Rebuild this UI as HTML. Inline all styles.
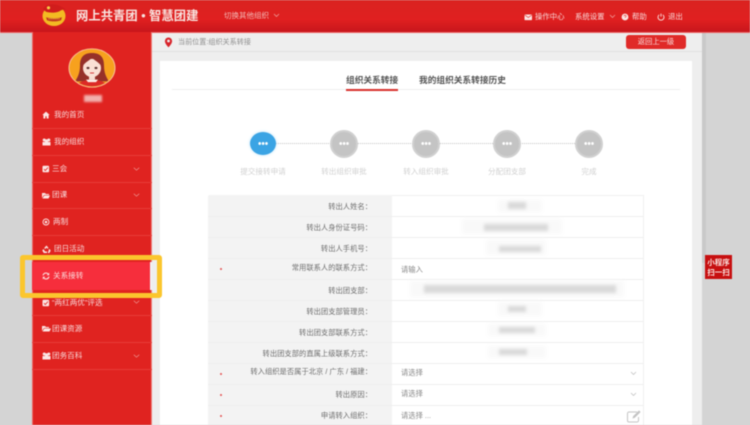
<!DOCTYPE html>
<html lang="zh"><head><meta charset="utf-8"><title>关系接转</title>
<style>
*{box-sizing:border-box}
html,body{margin:0;padding:0;width:750px;height:425px;overflow:hidden;background:#d4d4d4}
body{font-family:"Liberation Sans","Noto Sans CJK SC",sans-serif;position:relative}
#w{position:absolute;left:0;top:0;width:750px;height:425px;overflow:hidden;filter:blur(.6px);background:#d4d4d4}
.a{position:absolute;white-space:nowrap}
.hd{left:0;top:0;width:750px;height:32.5px;background:linear-gradient(#da2320 0,#e02020 60%,#c8161c 100%);border-bottom:.5px solid #e66}
.m{left:31.5px;width:120px;height:27px;border-bottom:1px solid #e73c38;}
.t{color:#f8d8d8;font-size:7.6px;line-height:10px}
.n{color:#f8d8d8;font-size:7.4px;line-height:10px}
.lb{width:200px;left:172px;text-align:right;font-size:7.3px;color:#6e6e6e;line-height:10px}
.line{left:208px;width:435px;height:1px;background:#eeeeee}
.ph{left:401px;font-size:7.3px;color:#888;line-height:10px}
.st{color:#d0d0d0;font-size:7.6px;line-height:10px;text-align:center;width:80px}
.dot{width:28px;height:28px;border-radius:50%;background:#c4c4c4;border:2px solid #d0d0d0}
.dots{width:10px;height:3px;background:radial-gradient(circle,#fff 1.3px,transparent 1.5px) 0 0/3.4px 3px repeat-x}
.b{background:#d9d9d9;filter:blur(1.5px)}
.h{background:#f9f9f9;filter:blur(2px)}
.req{left:220px;width:2px;height:2px;background:#e35050;border-radius:50%}
</style></head><body>
<div id="w">
<div class="a hd"></div>
<!-- logo -->
<svg class="a" style="left:41px;top:3px" width="27" height="24" viewBox="0 0 27 24"><ellipse cx="13" cy="13" rx="11.500" ry="10" fill="#f3bb22"/><path d="M2 6C4 2.500 7 1.200 11 1.200c5 0 9.500 1.800 14 5.300-3.500-.3-5 .7-7 2-4 1.500-9 1.500-13 .3C4 8 3 7 2 6z" fill="#d01d1c"/><circle cx="7.500" cy="4.800" r="1.600" fill="#f7cf48"/><path d="M5 14.200c5 1.500 11 1.500 16 0l-1 3c-4 1.600-10 1.600-14 0z" fill="#c23a1e"/><path d="M7.500 15.800h11" stroke="#f7d65a" stroke-width=".7" stroke-dasharray="1.200 .8"/></svg>
<div class="a" style="left:76px;top:9px;font-size:12.300px;line-height:15px;font-weight:bold;color:#f8e4e0;letter-spacing:.05px">网上共青团 • 智慧团建</div>
<div class="a" style="left:224px;top:11px;font-size:7.500px;line-height:10px;color:#f3b9b6">切换其他组织</div>
<svg class="a" style="left:273px;top:13px" width="7" height="5"><path d="M1 1l2.500 2.500L6 1" fill="none" stroke="#f0a9a5" stroke-width=".7"/></svg>
<!-- right nav -->
<svg class="a" style="left:524px;top:14px" width="9" height="7"><rect x=".5" y=".5" width="7.500" height="5.600" rx=".6" fill="#fbe6e4"/><path d="M.8 1l3.500 2.500L7.800 1" stroke="#da2320" stroke-width=".6" fill="none"/></svg>
<div class="a n" style="left:535px;top:12px">操作中心</div>
<div class="a n" style="left:575px;top:12px">系统设置</div>
<svg class="a" style="left:609px;top:14px" width="7" height="5"><path d="M1 1l2.500 2.500L6 1" fill="none" stroke="#f0a9a5" stroke-width=".7"/></svg>
<svg class="a" style="left:621px;top:13px" width="8" height="8"><circle cx="4" cy="4" r="3.400" fill="#fbe6e4"/><path d="M3 3.200c0-1.300 2.100-1.300 2.100 0 0 .8-1 .8-1 1.600" stroke="#da2320" stroke-width=".6" fill="none"/></svg>
<div class="a n" style="left:632px;top:12px">帮助</div>
<svg class="a" style="left:657px;top:13px" width="8" height="8"><path d="M2.200 1.800a3 3 0 1 0 3.600 0M4 .6v3" stroke="#fbe6e4" stroke-width=".9" fill="none"/></svg>
<div class="a n" style="left:668px;top:12px">退出</div>

<!-- content bg -->
<div class="a" style="left:151px;top:33px;width:551px;height:392px;background:#eeeeee"></div>
<div class="a" style="left:702px;top:33px;width:4px;height:230px;background:#c9c9c9"></div>
<div class="a" style="left:152px;top:51px;width:550px;height:1px;background:#e0e0e0"></div>
<svg class="a" style="left:164px;top:37px" width="9" height="11" viewBox="0 0 9 11"><path d="M4.500.5a3.600 3.600 0 0 0-3.600 3.600c0 2.600 3.600 6.200 3.600 6.200s3.600-3.600 3.600-6.200A3.600 3.600 0 0 0 4.500.5z" fill="#d8232a"/><circle cx="4.500" cy="4" r="1.400" fill="#eee"/></svg>
<div class="a" style="left:178px;top:37px;font-size:7.100px;line-height:10px;color:#8e8e8e">当前位置:组织关系转接</div>
<div class="a" style="left:626px;top:35px;width:60px;height:14px;border-radius:3px;background:#e02a28;color:#f9dcda;font-size:7.300px;line-height:14px;text-align:center">返回上一级</div>

<!-- card -->
<div class="a" style="left:160px;top:61px;width:532px;height:364px;background:#fff"></div>
<div class="a" style="left:172px;top:89px;width:508px;height:1px;background:#eeeeee"></div>
<div class="a" style="left:346px;top:75px;font-size:8.700px;line-height:11px;font-weight:bold;color:#555">组织关系转接</div>
<div class="a" style="left:346px;top:89px;width:52px;height:1.500px;background:#d8302c"></div>
<div class="a" style="left:419px;top:75px;font-size:8.700px;line-height:11px;font-weight:bold;color:#555">我的组织关系转接历史</div>

<!-- steps -->
<div class="a" style="left:275px;top:143px;width:302px;border-top:1px dotted #c4c4c4"></div>
<div class="a" style="left:250px;top:132px;width:26px;height:23px;border-radius:50%;background:#3ba4e4;box-shadow:0 0 3px #bfe3f8"></div>
<div class="a dots" style="left:258px;top:142px"></div>
<div class="a dot" style="left:330px;top:130px"></div><div class="a dots" style="left:339px;top:142px"></div>
<div class="a dot" style="left:412px;top:130px"></div><div class="a dots" style="left:421px;top:142px"></div>
<div class="a dot" style="left:493px;top:130px"></div><div class="a dots" style="left:502px;top:142px"></div>
<div class="a dot" style="left:575px;top:130px"></div><div class="a dots" style="left:584px;top:142px"></div>
<div class="a st" style="left:223px;top:167px">提交接转申请</div>
<div class="a st" style="left:304px;top:167px">转出组织审批</div>
<div class="a st" style="left:386px;top:167px">转入组织审批</div>
<div class="a st" style="left:467px;top:167px">分配团支部</div>
<div class="a st" style="left:549px;top:167px">完成</div>

<!-- table -->
<div class="a" style="left:208px;top:195px;width:184px;height:230px;background:#f3f3f3;border-radius:2px 0 0 0"></div>
<div class="a" style="left:392px;top:195px;width:251.500px;height:230px;border:1px solid #f0f0f0;border-bottom:0;border-left:0"></div>
<div class="a line" style="top:216px"></div><div class="a line" style="top:237px"></div><div class="a line" style="top:258px"></div><div class="a line" style="top:279px"></div><div class="a line" style="top:300px"></div><div class="a line" style="top:321px"></div><div class="a line" style="top:342px"></div><div class="a line" style="top:363px"></div><div class="a line" style="top:384px"></div><div class="a line" style="top:405px"></div>
<div class="a lb" style="top:202px">转出人姓名：</div>
<div class="a lb" style="top:223px">转出人身份证号码：</div>
<div class="a lb" style="top:244px">转出人手机号：</div>
<div class="a lb" style="top:263px">常用联系人的联系方式：</div>
<div class="a lb" style="top:286px">转出团支部：</div>
<div class="a lb" style="top:307px">转出团支部管理员：</div>
<div class="a lb" style="top:328px">转出团支部联系方式：</div>
<div class="a lb" style="top:349px">转出团支部的直属上级联系方式：</div>
<div class="a lb" style="top:367px">转入组织是否属于北京 / 广东 / 福建：</div>
<div class="a lb" style="top:390px">转出原因：</div>
<div class="a lb" style="top:411px">申请转入组织：</div>
<div class="a req" style="top:268px"></div><div class="a req" style="top:373px"></div><div class="a req" style="top:394px"></div><div class="a req" style="top:415px"></div>
<div class="a ph" style="top:265px">请输入</div>
<div class="a ph" style="top:368px">请选择</div>
<div class="a ph" style="top:389px">请选择</div>
<div class="a ph" style="top:411px">请选择 ...</div>
<svg class="a" style="left:630px;top:371px" width="7" height="5"><path d="M1 1l2.500 2.500L6 1" fill="none" stroke="#bbb" stroke-width=".7"/></svg>
<svg class="a" style="left:630px;top:392px" width="7" height="5"><path d="M1 1l2.500 2.500L6 1" fill="none" stroke="#bbb" stroke-width=".7"/></svg>
<svg class="a" style="left:626px;top:409px" width="16" height="14" viewBox="0 0 16 14"><path d="M11 3H3a1.500 1.500 0 0 0-1.500 1.500v7A1.500 1.500 0 0 0 3 13h8a1.500 1.500 0 0 0 1.500-1.500V8" fill="none" stroke="#c4c4c4" stroke-width="1"/><path d="M6.500 9.500l.6-2.200L13 1.400l1.600 1.600-5.900 5.900z" fill="#c4c4c4"/></svg>
<!-- masked values -->
<div class="a h" style="left:498px;top:200px;width:44px;height:12px"></div>
<div class="a h" style="left:462px;top:219px;width:100px;height:15px"></div>
<div class="a h" style="left:486px;top:240px;width:60px;height:15px"></div>
<div class="a h" style="left:410px;top:281px;width:214px;height:16px"></div>
<div class="a h" style="left:498px;top:302px;width:44px;height:14px"></div>
<div class="a h" style="left:488px;top:324px;width:58px;height:12px"></div>
<div class="a h" style="left:488px;top:346px;width:58px;height:12px"></div>
<div class="a b" style="left:508px;top:202px;width:18px;height:7px"></div>
<div class="a b" style="left:484px;top:224px;width:64px;height:7px"></div>
<div class="a b" style="left:499px;top:246px;width:42px;height:6px"></div>
<div class="a b" style="left:424px;top:285px;width:192px;height:8px"></div>
<div class="a b" style="left:508px;top:306px;width:18px;height:6px"></div>
<div class="a b" style="left:499px;top:327px;width:36px;height:6px"></div>
<div class="a b" style="left:499px;top:349px;width:28px;height:6px"></div>

<!-- sidebar -->
<div class="a" style="left:31.500px;top:32px;width:120px;height:393px;background:#e02320;border-right:1px solid #ee7c78;border-left:.5px solid #ea6a66"></div>
<svg class="a" style="left:67.500px;top:47.500px" width="48" height="40" viewBox="0 0 48 48" preserveAspectRatio="none"><defs><clipPath id="av"><circle cx="24" cy="24" r="22"/></clipPath></defs><circle cx="24" cy="24" r="23" fill="#f7a11e" stroke="#f8bf96" stroke-width="1"/><g clip-path="url(#av)"><path d="M24 6C15 6 12 12 12 21c0 8-2 14-5 19h34c-3-5-5-11-5-19 0-9-3-15-12-15z" fill="#963029"/><path d="M7 48c1-6 9-10 17-10s16 4 17 10z" fill="#dc2a26"/><path d="M18 38h12l-2 3h-8z" fill="#fdf2ec"/><rect x="21" y="32" width="6" height="6" fill="#f7dcd0"/><ellipse cx="24" cy="24" rx="9" ry="11" fill="#fae0d4"/><path d="M24 12c-4 4-8 6-10 11 0-7 4-13 10-13s10 6 10 13c-2-5-6-7-10-11z" fill="#963029"/><ellipse cx="20" cy="24" rx="1.500" ry="1.300" fill="#5a3230"/><ellipse cx="28" cy="24" rx="1.500" ry="1.300" fill="#5a3230"/><path d="M22 30h4" stroke="#d53b3b" stroke-width="1.200"/></g></svg>
<div class="a" style="left:84px;top:95px;width:18px;height:7px;background:#f2b0ac;filter:blur(1px)"></div>

<div class="a m" style="top:102px"></div>
<div class="a m" style="top:129px"></div>
<div class="a m" style="top:156px"></div>
<div class="a m" style="top:182px"></div>
<div class="a m" style="top:209px"></div>
<div class="a m" style="top:289px"></div>
<div class="a m" style="top:316px"></div>
<div class="a m" style="top:343px"></div>
<div class="a" style="left:31.500px;top:262px;width:118px;height:28px;background:#f62e3c"></div>
<div class="a" style="left:149.500px;top:262px;width:2.500px;height:28px;background:#f1f1f1"></div>
<!-- highlight -->
<div class="a" style="left:20px;top:255px;width:142px;height:43px;border:5px solid #fbc62d;border-radius:3px"></div>

<!-- menu icons -->
<svg class="a" style="left:42px;top:111px" width="8" height="8"><path d="M4 .6L.3 4h1.100v3.500h2V5.200h1.200v2.300h2V4h1.100z" fill="#fbe6e4"/></svg>
<svg class="a" style="left:42px;top:138px" width="9" height="8"><circle cx="2.200" cy="2" r="1.500" fill="#fbe6e4"/><circle cx="6.800" cy="2" r="1.500" fill="#fbe6e4"/><circle cx="4.500" cy="3" r="1.700" fill="#fbe6e4"/><path d="M.5 7.500V4h8v3.500z" fill="#fbe6e4"/></svg>
<svg class="a" style="left:42px;top:165px" width="8" height="8"><rect x=".5" y=".8" width="6.600" height="6.400" rx="1" fill="#fbe6e4"/><path d="M2 4.200l1.300 1.300L6 2.500" stroke="#e02320" stroke-width=".8" fill="none"/></svg>
<svg class="a" style="left:42px;top:192px" width="8" height="7"><path d="M0 1h3l1 1h3v1H2L0 6zM2.300 3.500H8L6.500 6.500H.5z" fill="#fbe6e4"/></svg>
<svg class="a" style="left:42px;top:218px" width="8" height="8"><circle cx="4" cy="4" r="3" fill="none" stroke="#fbe6e4" stroke-width=".9"/><circle cx="4" cy="4" r="1.300" fill="#fbe6e4"/></svg>
<svg class="a" style="left:42px;top:245px" width="9" height="8"><path d="M4.500.5l2 2.500-1 .8L4.500 2.600 3.300 4 2.200 3zM1.500 4l1.500 2.500H5V8H1.800L.3 5.500zM7.600 4l1.100 1.800L7.300 8H6V6.500h.7l-.1-1.800z" fill="#fbe6e4"/></svg>
<svg class="a" style="left:42px;top:272px" width="8" height="8" viewBox="0 0 8 8"><path d="M1 3.400A3 3 0 0 1 6.200 2M7 4.600A3 3 0 0 1 1.800 6" fill="none" stroke="#fbe6e4" stroke-width="1"/><path d="M7.200 .6v2.600H4.800zM.8 7.400V4.800h2.400z" fill="#fbe6e4"/></svg>
<svg class="a" style="left:42px;top:299px" width="8" height="8"><rect x=".5" y=".8" width="6.600" height="6.400" rx="1" fill="#fbe6e4"/><path d="M2 4.200l1.300 1.300L6 2.500" stroke="#e02320" stroke-width=".8" fill="none"/></svg>
<svg class="a" style="left:42px;top:325px" width="9" height="7"><path d="M0 1h3l1 1h3v1H2L0 6zM2.300 3.500H9L7.500 6.500H.5z" fill="#fbe6e4"/></svg>
<svg class="a" style="left:42px;top:352px" width="9" height="8"><circle cx="2.200" cy="2" r="1.500" fill="#fbe6e4"/><circle cx="6.800" cy="2" r="1.500" fill="#fbe6e4"/><circle cx="4.500" cy="3" r="1.700" fill="#fbe6e4"/><path d="M.5 7.500V4h8v3.500z" fill="#fbe6e4"/></svg>
<!-- menu text -->
<div class="a t" style="left:54px;top:110px">我的首页</div>
<div class="a t" style="left:54px;top:137px">我的组织</div>
<div class="a t" style="left:52px;top:164px">三会</div>
<div class="a t" style="left:52px;top:190px">团课</div>
<div class="a t" style="left:53px;top:217px">两制</div>
<div class="a t" style="left:54px;top:244px">团日活动</div>
<div class="a t" style="left:53px;top:271px;color:#fbdcdc">关系接转</div>
<div class="a t" style="left:52px;top:298px">“两红两优”评选</div>
<div class="a t" style="left:52px;top:324px">团课资源</div>
<div class="a t" style="left:52px;top:351px">团务百科</div>
<svg class="a" style="left:133px;top:167px" width="7" height="5"><path d="M.8 .8L3.500 3.200 6.200 .8" fill="none" stroke="#ef9a96" stroke-width=".7"/></svg>
<svg class="a" style="left:133px;top:193px" width="7" height="5"><path d="M.8 .8L3.500 3.200 6.200 .8" fill="none" stroke="#ef9a96" stroke-width=".7"/></svg>
<svg class="a" style="left:133px;top:300px" width="7" height="5"><path d="M.8 .8L3.500 3.200 6.200 .8" fill="none" stroke="#ef9a96" stroke-width=".7"/></svg>
<svg class="a" style="left:133px;top:354px" width="7" height="5"><path d="M.8 .8L3.500 3.200 6.200 .8" fill="none" stroke="#ef9a96" stroke-width=".7"/></svg>

<!-- badge -->
<div class="a" style="left:705px;top:255px;width:27px;height:24px;background:#c70f10;color:#fbe4e0;font-size:7.500px;line-height:9.500px;font-weight:bold;text-align:center;padding-top:3px;white-space:normal">小程序<br>扫一扫</div>
</div>
</body></html>
